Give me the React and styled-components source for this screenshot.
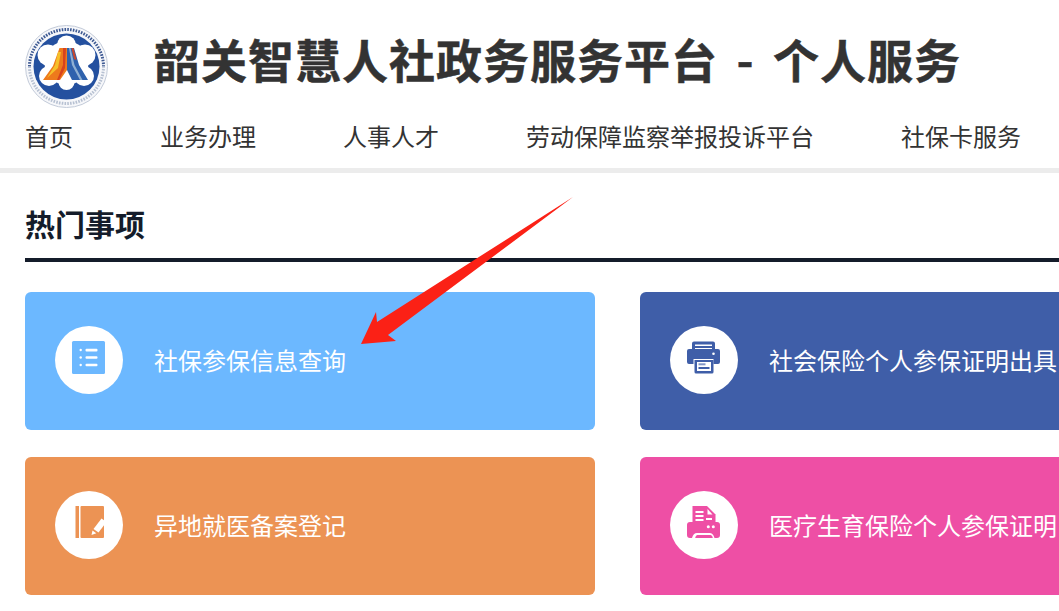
import React from 'react';
import styled, { createGlobalStyle } from 'styled-components';

const GlobalStyle = createGlobalStyle`
  html, body {
    margin: 0;
    padding: 0;
    background: #fff;
    overflow: hidden;
  }
  body {
    font-family: "Noto Sans CJK SC", "Noto Sans", sans-serif;
  }
`;

const Page = styled.div`
  position: relative;
  width: 1059px;
  height: 611px;
  overflow: hidden;
`;

const Header = styled.header`
  height: 143px;
  padding: 25px 0 0 25px;
  border-bottom: 5px solid #ececec;
`;

const Brand = styled.div`
  display: flex;
  align-items: flex-start;
  height: 83px;
  gap: 46px;
`;

const Title = styled.h1`
  margin: 0;
  font-size: 46px;
  line-height: 66px;
  font-weight: 700;
  letter-spacing: 1px;
  word-spacing: 7px;
  color: #333;
  -webkit-text-stroke: 0.5px #333;
  white-space: pre;
`;

const Nav = styled.nav`
  display: flex;
  gap: 87px;
  margin-top: 10px;
  white-space: nowrap;
`;

const NavItem = styled.a`
  font-size: 24px;
  line-height: 36px;
  color: #333;
`;

const Section = styled.section`
  padding: 30px 0 0 25px;
`;

const SectionTitle = styled.h2`
  margin: 0;
  height: 55px;
  width: 1100px;
  font-size: 30px;
  line-height: 40px;
  font-weight: 700;
  color: #141c2a;
  border-bottom: 4px solid #141c2a;
`;

const CardGrid = styled.div`
  display: grid;
  grid-template-columns: 570px 570px;
  grid-auto-rows: 138px;
  column-gap: 45px;
  row-gap: 27px;
  margin-top: 30px;
`;

const Card = styled.div`
  display: flex;
  align-items: center;
  gap: 31px;
  padding-left: 30px;
  border-radius: 6px;
  background: ${(p) => p.$bg};
  color: #fff;
  font-size: 24px;
  white-space: nowrap;
`;

const CardLabel = styled.span`
  margin-top: -4px;
`;

const IconCircle = styled.div`
  flex: none;
  width: 68px;
  height: 68px;
  margin-top: -2px;
  border-radius: 50%;
  background: #fff;
  color: ${(p) => p.$color};
`;

const IconSvg = styled.svg`
  display: block;
  width: 68px;
  height: 68px;
`;

const Arrow = styled.svg`
  position: absolute;
  left: 0;
  top: 0;
  pointer-events: none;
`;

const Logo = () => (
  <svg width="83" height="83" viewBox="0 0 83 83">
    <circle cx="41.5" cy="41.5" r="41" fill="#f6f7fa" stroke="#c3cbd9" strokeWidth="1" />
    <path d="M4.500 41.500A37 37 0 0 1 78.500 41.500" fill="none" stroke="#3e5a93" strokeWidth="3" strokeDasharray="1.6 1.2" />
    <path d="M4.500 41.500A37 37 0 0 0 78.500 41.500" fill="none" stroke="#b7c1d2" strokeWidth="3" strokeDasharray="1.6 1.2" />
    <circle cx="41.5" cy="41.5" r="33" fill="#24509f" />
    <g fill="#fff">
      <circle cx="41.5" cy="20" r="9.500" />
      <circle cx="23" cy="30" r="10.500" />
      <circle cx="60" cy="30" r="10.500" />
      <circle cx="24" cy="51" r="10" />
      <circle cx="59" cy="51" r="10" />
      <circle cx="41.5" cy="57" r="8" />
      <circle cx="41.5" cy="38" r="22" />
    </g>
    <path d="M34.500 23h7.500v22l-7 10H18l10-14z" fill="#ee7a1c" />
    <path d="M33 27l-3 13-8 13 11-10 3-16z" fill="#f6c02a" />
    <path d="M38 23h3l-1 20-6 12h-2l6-15z" fill="#d8431e" />
    <path d="M42 23h7l5 17 9 15H47l-5-10z" fill="#2f62ad" />
    <path d="M44 23h1.500l4 17 8 15h-2.500l-8-15z" fill="#8fb0d3" />
    <path d="M46.500 23h2l3 12-2.500-1z" fill="#c9472c" />
  </svg>
);

const ListIcon = () => (
  <IconSvg viewBox="0 0 68 68">
    <rect x="17" y="15" width="33" height="33" rx="1.5" fill="currentColor" />
    <g fill="#fff">
      <circle cx="25.700" cy="24" r="1.200" />
      <circle cx="25.700" cy="31.500" r="1.200" />
      <circle cx="25.700" cy="39" r="1.200" />
      <rect x="30.500" y="22.800" width="12" height="2.600" rx="1" />
      <rect x="30.500" y="30.200" width="12" height="2.600" rx="1" />
      <rect x="30.500" y="37.700" width="12" height="2.600" rx="1" />
    </g>
  </IconSvg>
);

const PrinterIcon = () => (
  <IconSvg viewBox="0 0 68 68">
    <path d="M22 23v-5.500a2 2 0 0 1 2-2h19a2 2 0 0 1 2 2V23h-3v-4.500H25V23z" fill="currentColor" />
    <rect x="25" y="20" width="17" height="2" fill="currentColor" />
    <path d="M19 23h29a2 2 0 0 1 2 2v11a2 2 0 0 1-2 2h-4.500v-5h-20v5H19a2 2 0 0 1-2-2V25a2 2 0 0 1 2-2z" fill="currentColor" />
    <circle cx="43.500" cy="27.800" r="1.300" fill="#fff" />
    <path d="M24.500 34h19v12a1.500 1.500 0 0 1-1.500 1.500H26a1.500 1.500 0 0 1-1.500-1.500z" fill="currentColor" />
    <rect x="27" y="36" width="14" height="9" fill="#fff" />
    <rect x="28.500" y="37.300" width="7" height="2" fill="currentColor" opacity="0.65" />
    <rect x="28.500" y="41" width="11" height="2" fill="currentColor" />
  </IconSvg>
);

const NotebookIcon = () => (
  <IconSvg viewBox="0 0 68 68">
    <rect x="20.500" y="15" width="3.500" height="32" fill="currentColor" />
    <rect x="25.500" y="15" width="23.500" height="32" rx="1" fill="currentColor" />
    <path d="M46.500 27.500l5 3.500-8 10.500-5-3.500z" fill="#fff" />
    <path d="M37.500 39.500l3.800 2.700-4.800 1.800z" fill="#fff" />
  </IconSvg>
);

const FaxIcon = () => (
  <IconSvg viewBox="0 0 68 68">
    <path d="M22.500 15h14.500l8.500 8.500V36h-23z" fill="currentColor" />
    <path d="M37.500 18l5 5.500h-5z" fill="#fff" />
    <g fill="#fff">
      <rect x="25.500" y="20" width="8" height="2" />
      <rect x="25.500" y="24" width="8" height="2" />
      <rect x="25.500" y="28" width="8" height="2" />
      <rect x="36" y="27" width="6" height="2" />
    </g>
    <path d="M20 31h27a3 3 0 0 1 3 3v10a3 3 0 0 1-3 3h-2.500c-1-3.500-2.500-5-5-5H27c-2.500 0-4 1.500-5 5h-2a3 3 0 0 1-3-3V34a3 3 0 0 1 3-3z" fill="currentColor" />
    <circle cx="38.300" cy="35.700" r="1.500" fill="#fff" />
    <circle cx="43.300" cy="35.700" r="1.500" fill="#fff" />
    <path d="M27.500 44h13c1 0 1.800.8 2.300 3H25.200c.5-2.200 1.300-3 2.300-3z" fill="currentColor" />
  </IconSvg>
);

const items = [
  { label: '社保参保信息查询', bg: '#6cb8ff', Icon: ListIcon },
  { label: '社会保险个人参保证明出具', bg: '#3f5ea8', Icon: PrinterIcon },
  { label: '异地就医备案登记', bg: '#ec9354', Icon: NotebookIcon },
  { label: '医疗生育保险个人参保证明', bg: '#ee4fa5', Icon: FaxIcon },
];

const navItems = ['首页', '业务办理', '人事人才', '劳动保障监察举报投诉平台', '社保卡服务'];

export default function App() {
  return (
    <Page>
      <GlobalStyle />
      <Header>
        <Brand>
          <Logo />
          <Title>韶关智慧人社政务服务平台 - 个人服务</Title>
        </Brand>
        <Nav>
          {navItems.map((n) => (
            <NavItem key={n}>{n}</NavItem>
          ))}
        </Nav>
      </Header>
      <Section>
        <SectionTitle>热门事项</SectionTitle>
        <CardGrid>
          {items.map(({ label, bg, Icon }) => (
            <Card key={label} $bg={bg}>
              <IconCircle $color={bg}>
                <Icon />
              </IconCircle>
              <CardLabel>{label}</CardLabel>
            </Card>
          ))}
        </CardGrid>
      </Section>
      <Arrow width="1059" height="611" viewBox="0 0 1059 611">
        <path d="M573 197L377 322L376 312L361 344L396 341L388 335Z" fill="#fb2116" />
      </Arrow>
    </Page>
  );
}
